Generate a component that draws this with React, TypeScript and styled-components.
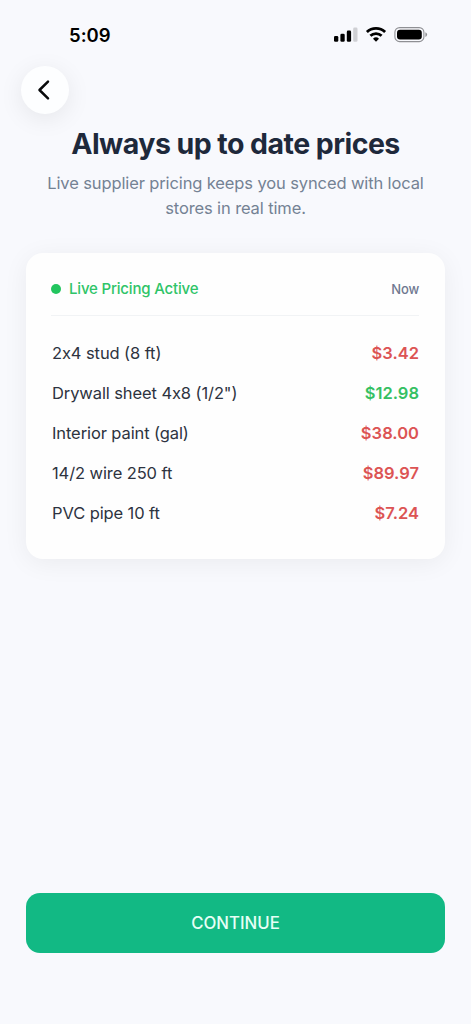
import React from 'react';
import styled, { createGlobalStyle } from 'styled-components';

const GlobalStyle = createGlobalStyle`
  * { box-sizing: border-box; }
  body { margin: 0; background: #f8f9fd; font-family: Inter, "Liberation Sans", sans-serif; font-feature-settings: "calt" 0; }
`;

const Screen = styled.main`
  display: flex;
  flex-direction: column;
  height: 1024px;
  padding: 0 26px 71px;
  background: #f8f9fd;
`;

const StatusBar = styled.div`
  display: flex;
  justify-content: space-between;
  align-items: center;
  height: 66px;
  padding: 4px 17px 0 43px;
`;

const Time = styled.span`
  font-size: 18.5px;
  font-weight: 600;
  line-height: 24px;
  color: #000;
`;

const StatusIcons = styled.div`
  display: flex;
  align-items: center;
`;

const BackButton = styled.button`
  display: flex;
  align-items: center;
  justify-content: center;
  width: 48px;
  height: 48px;
  margin-left: -5px;
  padding: 0;
  border: 0;
  border-radius: 50%;
  background: #fdfeff;
  box-shadow: 0 5px 24px rgba(0, 0, 0, 0.08);
`;

const Title = styled.h1`
  margin: 12px 0 0;
  font-size: 28.5px;
  font-weight: 700;
  line-height: 36px;
  letter-spacing: -0.54px;
  text-align: center;
  white-space: nowrap;
  color: #1e293b;
`;

const Subtitle = styled.p`
  margin: 9px 0 0;
  font-size: 16.5px;
  line-height: 25px;
  letter-spacing: -0.12px;
  text-align: center;
  color: #748294;
`;

const Card = styled.section`
  height: 306px;
  margin-top: 32px;
  padding: 20px 26px 0 25px;
  border-radius: 17px;
  background: #fefefe;
  box-shadow: 0 4px 26px rgba(0, 0, 0, 0.06);
`;

const CardHeader = styled.header`
  display: flex;
  align-items: center;
  justify-content: space-between;
  height: 43px;
  padding-bottom: 11px;
  border-bottom: 1px solid #f1f3f5;
`;

const Live = styled.div`
  display: flex;
  align-items: center;
  gap: 8px;
  font-size: 15px;
  font-weight: 500;
  letter-spacing: -0.18px;
  color: #2fc468;
`;

const Dot = styled.i`
  width: 10px;
  height: 10px;
  border-radius: 50%;
  background: #22c55e;
`;

const Updated = styled.span`
  font-size: 13px;
  font-weight: 500;
  letter-spacing: -0.2px;
  color: #6f7890;
`;

const PriceList = styled.ul`
  margin: 17px 0 0;
  padding: 0 0 0 1px;
  list-style: none;
`;

const PriceRow = styled.li`
  display: flex;
  align-items: center;
  justify-content: space-between;
  height: 40px;
  font-size: 16.5px;
  letter-spacing: -0.1px;
  color: #2d3340;
`;

const Price = styled.span<{ $down?: boolean }>`
  font-weight: 600;
  letter-spacing: 0.02px;
  color: ${(p) => (p.$down ? '#35c063' : '#dc5454')};
`;

const ContinueButton = styled.button`
  height: 60px;
  margin-top: auto;
  padding: 0;
  border: 0;
  border-radius: 14px;
  background: #12b984;
  color: #e6fff6;
  font-family: inherit;
  font-size: 16.8px;
  font-weight: 500;
`;

const items = [
  { name: '2x4 stud (8 ft)', price: '$3.42' },
  { name: 'Drywall sheet 4x8 (1/2")', price: '$12.98', down: true },
  { name: 'Interior paint (gal)', price: '$38.00' },
  { name: '14/2 wire 250 ft', price: '$89.97' },
  { name: 'PVC pipe 10 ft', price: '$7.24' },
];

const StatusGlyphs = () => (
  <svg width="96" height="20" viewBox="0 0 96 20" aria-hidden="true">
    <rect x="2" y="11" width="4.3" height="5.8" rx="1.3" />
    <rect x="8.4" y="8.8" width="4.3" height="8" rx="1.3" />
    <rect x="14.8" y="5.6" width="4.3" height="11.2" rx="1.3" />
    <rect x="21.2" y="2.6" width="4.3" height="14.2" rx="1.3" fill="#cfd0d4" />
    <g fill="none" stroke="#000" strokeWidth="2.8">
      <path d="M34.9 7.1a13 13 0 0 1 18.2 0" />
      <path d="M38.4 10.8a8.1 8.1 0 0 1 11.2 0" />
    </g>
    <path d="M44 16.7l-3-3a4.3 4.3 0 0 1 6 0z" />
    <rect x="62.9" y="2.6" width="29" height="14" rx="4.7" fill="none" stroke="#8f9094" strokeWidth="1.1" />
    <rect x="65" y="4.7" width="24.8" height="9.8" rx="3" />
    <path d="M93.4 7.3q1.7.6 1.7 2.3t-1.7 2.3z" fill="#8f9094" />
  </svg>
);

export default function App() {
  return (
    <>
      <GlobalStyle />
      <Screen>
        <StatusBar>
          <Time>5:09</Time>
          <StatusIcons>
            <StatusGlyphs />
          </StatusIcons>
        </StatusBar>
        <BackButton aria-label="Back">
          <svg width="24" height="24" viewBox="0 0 24 24" fill="none" stroke="#08090b" strokeWidth="2.5" strokeLinecap="round" strokeLinejoin="round">
            <path d="M15 3.6L6.5 12L15 20.4" />
          </svg>
        </BackButton>
        <Title>Always up to date prices</Title>
        <Subtitle>
          Live supplier pricing keeps you synced with local
          <br />
          stores in real time.
        </Subtitle>
        <Card>
          <CardHeader>
            <Live>
              <Dot />
              Live Pricing Active
            </Live>
            <Updated>Now</Updated>
          </CardHeader>
          <PriceList>
            {items.map((item) => (
              <PriceRow key={item.name}>
                <span>{item.name}</span>
                <Price $down={item.down}>{item.price}</Price>
              </PriceRow>
            ))}
          </PriceList>
        </Card>
        <ContinueButton>CONTINUE</ContinueButton>
      </Screen>
    </>
  );
}
